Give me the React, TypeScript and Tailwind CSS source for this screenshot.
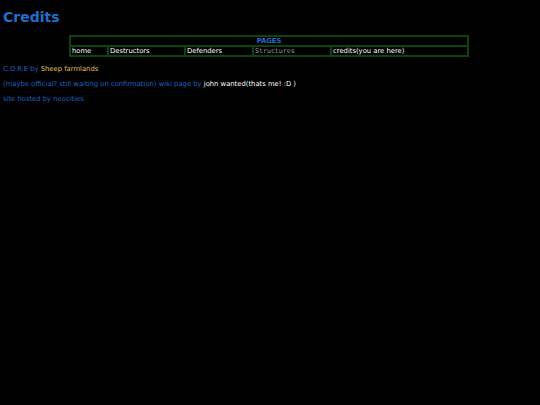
export default function App() {
  return (
    <div className="min-h-[405px] w-full bg-black px-[3px] pt-[8px] font-['DejaVu_Sans',sans-serif] text-[6.8px] text-[#1d62c4]">
      <h1 className="text-[14px] font-bold leading-[18px] text-[#1f6fd1]">Credits</h1>
      <div className="mt-[9px] flex justify-center pr-[2px]">
        <table className="w-[400px] border border-[#0d440d] border-separate border-spacing-0">
          <tbody>
            <tr>
              <td colSpan={5} className="h-[9px] border border-[#0d440d] p-0 text-center text-[6.8px] font-bold leading-[8px] text-[#1f6fd1]">
                PAGES
              </td>
            </tr>
            <tr className="text-[6.8px] leading-[8px] text-white">
              <td className="w-[38px] border border-[#0d440d] px-[1px] py-0">home</td>
              <td className="w-[77px] border border-[#0d440d] px-[1px] py-0">Destructors</td>
              <td className="w-[68px] border border-[#0d440d] px-[1px] py-0">Defenders</td>
              <td className="w-[78px] border border-[#0d440d] px-[1px] py-0 font-['DejaVu_Sans_Mono',monospace] text-[6.6px] text-[#9a9a9a]">Structures</td>
              <td className="border border-[#0d440d] px-[1px] py-0">credits(you are here)</td>
            </tr>
          </tbody>
        </table>
      </div>
      <p className="mt-[5px] leading-[15px]">
        C.O.R.E by <span className="text-[#e0c448]">Sheep farmlands</span>
      </p>
      <p className="leading-[15px]">
        (maybe official? still waiting on confirmation) wiki page by{" "}
        <span className="text-white">john wanted(thats me! :D )</span>
      </p>
      <p className="leading-[15px]">site hosted by neocities</p>
    </div>
  );
}
